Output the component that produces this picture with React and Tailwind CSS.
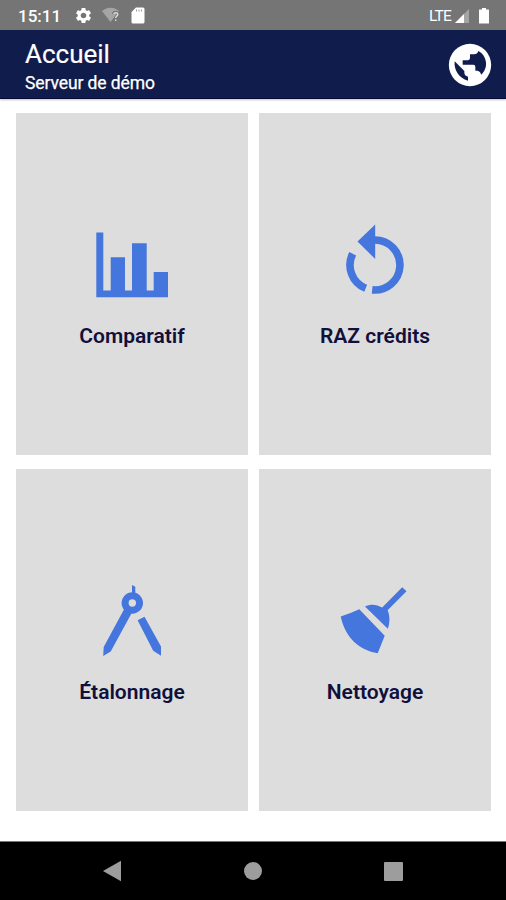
import { MdSettings } from "react-icons/md";

function GlobeIcon() {
  return (
    <svg viewBox="11 9 132 132" className="mt-[2px] size-[44px]">
      <circle cx="77" cy="75" r="63.5" fill="white" />
      <path d="M31 64C28 90 44 115 71 122V110Q60 108 60 97V93z" fill="#101c4c" />
      <path d="M102 33Q99 43 89 43H77V54Q77 60 71 61H55V74H87Q93 74 93 80V92H100Q108 94 111 104C126 88 129 70 121 53Q115 39 102 33z" fill="#101c4c" />
    </svg>
  );
}

function ChartIcon() {
  return (
    <svg viewBox="96 224 72 74" className="h-[74px] w-[72px]" fill="currentColor">
      <path d="M96.3 232.5h7v58h7.4v-33.2H125v33.2h7v-47.2h14.7v47.2h7V272H168v25.3H96.3z" />
    </svg>
  );
}

function ResetIcon() {
  return (
    <svg viewBox="339 224 72 74" className="h-[74px] w-[72px]" fill="none" stroke="currentColor" strokeWidth="7.6">
      <path d="M374 240h1a25 25 0 1 1-2.8 49.85M365.7 288.2a25 25 0 0 1-13-34.5" />
      <path d="M357.5 241.5l17.7-17V259z" fill="currentColor" stroke="none" />
    </svg>
  );
}

function CompassIcon() {
  return (
    <svg viewBox="96 580 72 76" className="h-[76px] w-[72px]" fill="currentColor">
      <circle cx="132.3" cy="603" r="7.2" fill="none" stroke="currentColor" strokeWidth="7" />
      <path d="M132 585l3.3 1.8V595H132zM124.5 608.5L103.7 647l-.5 9 7.5-4.5 21-38.5zM137.6 620.2l6.9-3.4L161 646.5v9.3l-7.8-5z" />
    </svg>
  );
}

function BroomIcon() {
  return (
    <svg viewBox="339 580 72 76" className="h-[76px] w-[72px]" fill="currentColor">
      <path d="M402.2 587.3l4.3 4-18.9 18.9c2.4 5 2.4 12.5.2 18.5L365 606.6c5.5-2.900 11.500-2.500 17.200 1z" />
      <path d="M340.7 616.5Q350 613.5 359.3 609.2l25.4 26.5-7 17.6C359.5 650 345.5 638.5 340.7 616.5z" />
    </svg>
  );
}

function Card({ label, children }) {
  return (
    <button className="flex h-[342px] flex-col items-center bg-[#dddddd] pt-[111px] text-[#4476dd]">
      <span className="flex h-[74px] items-start">{children}</span>
      <span className="mt-[23px] text-[21px] leading-[30px] font-semibold text-[#11103c]">{label}</span>
    </button>
  );
}

function StatusBar() {
  return (
    <div className="flex h-[30px] items-center bg-[#757575] text-white">
      <span className="ml-[18px] w-[43px] pt-[2px] text-[17px] leading-none font-medium whitespace-nowrap">15:11</span>
      <MdSettings className="ml-[13px] size-[19px]" />
      <svg viewBox="0 0 18 16" className="ml-[9px] h-4 w-[18px]">
        <path d="M0 4C5-.5 12-.5 17 4L8.5 15z" fill="#a5a5a5" />
        <path d="M11.5 7.2c.3-2.6 4.5-2.5 4.5 0 0 2-2.3 1.9-2.3 4.1M13.7 12.6v1.7" fill="none" stroke="#757575" strokeWidth="3" />
        <path d="M11.8 7.2c.3-2.1 4-2 4 0 0 1.8-2.1 1.8-2.1 3.8M13.7 12.5v1.6" fill="none" stroke="#d8d8d8" strokeWidth="1.5" />
      </svg>
      <svg viewBox="0 0 14 17" className="ml-[11px] h-[17px] w-[14px]">
        <path d="M5 .5h7q1.5 0 1.5 1.5v13q0 1.5-1.5 1.5H2Q.5 16.5.5 15V5z" fill="white" />
        <path d="M5.5 2.5v2M8 2.5v2M10.5 2.5v2" stroke="#999" strokeWidth="1" />
      </svg>
      <span className="mt-[3px] ml-auto text-[15.5px] leading-none tracking-[-0.8px]">LTE</span>
      <svg viewBox="0 0 16 16" className="mt-px ml-[3px] h-4 w-4">
        <path d="M15 1v14H1z" fill="#a5a5a5" />
        <path d="M10 6v9H1z" fill="white" />
      </svg>
      <svg viewBox="0 0 12 16" className="mt-[2px] mr-[16px] ml-[8px] h-4 w-3">
        <path d="M4 0h4v1.5h2.5q.5 0 .5.5v13q0 .5-.5.5h-9q-.5 0-.5-.5V2q0-.5.5-.5H4z" fill="white" />
      </svg>
    </div>
  );
}

export default function App() {
  return (
    <div className="flex h-[900px] w-[506px] flex-col overflow-hidden bg-white font-['Roboto',sans-serif]">
      <StatusBar />
      <header className="flex h-[69px] items-center justify-between border-b border-[#080b30] bg-[#101c4c] pr-[14px] pl-[25px] text-white shadow-[0_1px_2px_rgba(0,0,0,0.25)]">
        <div className="pt-[7px]">
          <h1 className="text-[26px] leading-[31px] [-webkit-text-stroke:0.2px_white]">Accueil</h1>
          <p className="text-[17.5px] leading-[27px] tracking-[-0.1px] [-webkit-text-stroke:0.25px_white]">Serveur de démo</p>
        </div>
        <GlobeIcon />
      </header>
      <main className="grid flex-1 grid-cols-[232px_232px] content-start gap-x-[11px] gap-y-[14px] pt-[14px] pl-[16px]">
        <Card label="Comparatif"><ChartIcon /></Card>
        <Card label="RAZ crédits"><ResetIcon /></Card>
        <Card label="Étalonnage"><CompassIcon /></Card>
        <Card label="Nettoyage"><BroomIcon /></Card>
      </main>
      <nav className="h-[59px] border-t border-[#777777] bg-black text-[#9d9d9d]">
        <div className="flex h-full items-center justify-between pr-[103px] pl-[102px]">
          <svg viewBox="0 0 20 22" className="h-[22px] w-5" fill="currentColor"><path d="M1 11L19 .8v20.4z" /></svg>
          <span className="size-[18px] rounded-full bg-[#9d9d9d]" />
          <span className="size-[19px] rounded-[1px] bg-[#9d9d9d]" />
        </div>
      </nav>
    </div>
  );
}
